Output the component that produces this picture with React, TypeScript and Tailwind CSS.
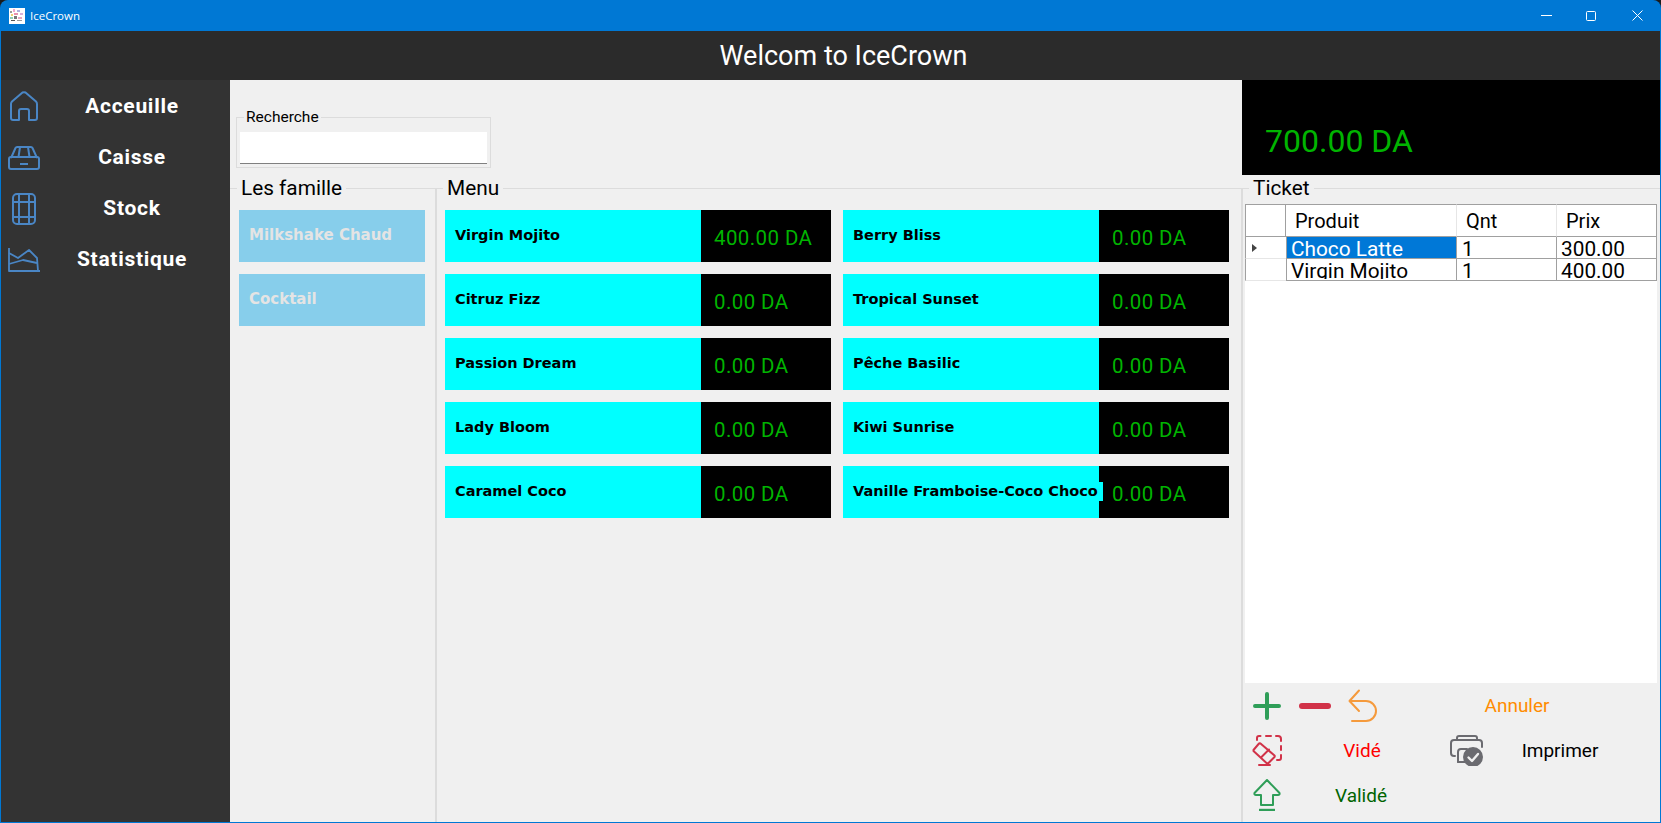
import type { ReactNode } from 'react';

const families = ['Milkshake Chaud', 'Cocktail'];

const menuItems = [
  { name: 'Virgin Mojito', price: '400.00 DA' },
  { name: 'Berry Bliss', price: '0.00 DA' },
  { name: 'Citruz Fizz', price: '0.00 DA' },
  { name: 'Tropical Sunset', price: '0.00 DA' },
  { name: 'Passion Dream', price: '0.00 DA' },
  { name: 'Pêche Basilic', price: '0.00 DA' },
  { name: 'Lady Bloom', price: '0.00 DA' },
  { name: 'Kiwi Sunrise', price: '0.00 DA' },
  { name: 'Caramel Coco', price: '0.00 DA' },
  { name: 'Vanille Framboise-Coco Choco', price: '0.00 DA' },
];

const ticketRows = [
  { name: 'Choco Latte', qty: '1', price: '300.00', selected: true },
  { name: 'Virgin Mojito', qty: '1', price: '400.00', selected: false },
];

function AppIcon() {
  return (
    <svg width="16" height="16" viewBox="0 0 16 16" className="shrink-0">
      <rect width="16" height="16" fill="#ffffff" />
      <rect x="1" y="3" width="2" height="2" fill="#9a9a9a" />
      <rect x="4" y="1" width="2" height="3" fill="#f0a8d0" />
      <rect x="8" y="2" width="3" height="2" fill="#b0b0e0" />
      <rect x="2" y="6" width="2" height="2" fill="#f0d070" />
      <rect x="5" y="5" width="4" height="2" fill="#e890b0" />
      <rect x="11" y="5" width="3" height="2" fill="#d8b0d8" />
      <rect x="1" y="9" width="3" height="2" fill="#90d0b8" />
      <rect x="5" y="8" width="3" height="3" fill="#777777" />
      <rect x="9" y="9" width="4" height="2" fill="#e8a8c0" />
      <rect x="2" y="12" width="4" height="1" fill="#555555" />
      <rect x="8" y="12" width="5" height="1" fill="#999999" />
    </svg>
  );
}

function HomeIcon() {
  return (
    <svg width="30" height="31" viewBox="0 0 30 31" fill="none" stroke="#4a86c5" strokeWidth="2" strokeLinejoin="round">
      <path d="M2 13 Q2 11.5 3 10.5 L13.5 1.5 Q15 .8 16.5 1.5 L27 10.5 Q28 11.5 28 13 V27 Q28 29 26 29 H20 V20 Q20 18 18 18 H12 Q10 18 10 20 V29 H4 Q2 29 2 27 Z" />
    </svg>
  );
}

function DrawerIcon() {
  return (
    <svg width="32" height="24" viewBox="0 0 32 24" fill="none" stroke="#4a86c5" strokeWidth="2" strokeLinejoin="round">
      <path d="M3 12 L7.5 2 Q8 1 9 1 H23 Q24 1 24.5 2 L29 12" />
      <path d="M12 1 L10.5 11 M20 1 L21.5 11" />
      <rect x="1" y="11" width="30" height="12" rx="2" />
      <path d="M12 18 H20" />
    </svg>
  );
}

function StockIcon() {
  return (
    <svg width="24" height="32" viewBox="0 0 24 32" fill="none" stroke="#4a86c5" strokeWidth="2">
      <rect x="1" y="1" width="22" height="30" rx="4" />
      <path d="M7 1 V31 M17 1 V31 M1 9 H23 M1 24 H23" />
    </svg>
  );
}

function ChartIcon() {
  return (
    <svg width="32" height="24" viewBox="0 0 32 24" fill="none" stroke="#4a86c5" strokeWidth="1.8" strokeLinejoin="round">
      <path d="M1 0 V23 H32" />
      <path d="M1 5 L10 10 L21 2 L29 10 L30 23" />
      <path d="M1 16 L15 12 L29 15" />
    </svg>
  );
}

function PlusIcon() {
  return (
    <svg width="28" height="28" viewBox="0 0 28 28" fill="none" stroke="#2f9e58" strokeWidth="4" strokeLinecap="round">
      <path d="M14 2 V26 M2 14 H26" />
    </svg>
  );
}

function MinusIcon() {
  return (
    <svg width="32" height="8" viewBox="0 0 32 8" fill="none" stroke="#d13248" strokeWidth="6" strokeLinecap="round">
      <path d="M3 4 H29" />
    </svg>
  );
}

function UndoIcon() {
  return (
    <svg width="30" height="33" viewBox="0 0 30 33" fill="none" stroke="#f59a3c" strokeWidth="2" strokeLinecap="round" strokeLinejoin="round">
      <path d="M11 1.5 L1.5 12 L11 22 M2 12 H18 A10 10 0 0 1 18 32 H4" />
    </svg>
  );
}

function EraseIcon() {
  return (
    <svg width="30" height="31" viewBox="0 0 30 31" fill="none" stroke="#d13248" strokeWidth="2" strokeLinejoin="round" strokeLinecap="round">
      <path d="M5 5 V3 Q5 1 7 1 H8.500 M14 1 H19 M24 1 H26 Q29 1 29 4 V6 M29 11 V15 M29 20 V23 Q29 25 27 25 H25" />
      <path d="M1.500 15 L7 8.500 Q7.500 8 8.500 8.500 L22.500 20.500 Q23 21 22.500 22 L16.500 28 Q15.500 28.500 14.500 28 L1.500 16 Z" />
      <path d="M17 14.500 L9.500 22" />
      <path d="M7 30 H18" />
    </svg>
  );
}

function PrinterCheckIcon() {
  return (
    <svg width="33" height="31" viewBox="0 0 33 31" fill="none" stroke="#6b6b70" strokeWidth="2" strokeLinecap="round" strokeLinejoin="round">
      <path d="M7 5 V3 Q7 1 9 1 H25 Q27 1 27 3 V5" />
      <path d="M5 21 H4 Q1 21 1 18 V8 Q1 5 4 5 H29 Q32 5 32 8 V12" />
      <path d="M8 27 V17 Q8 14 11 14 H17" />
      <path d="M8 27 Q8 27 11 27 H15" />
      <circle cx="23" cy="22" r="9" fill="#6b6b70" />
      <path d="M18.5 22.5 L22 26 L28 19" stroke="#f0f0f0" strokeWidth="2.4" />
    </svg>
  );
}

function UploadIcon() {
  return (
    <svg width="28" height="32" viewBox="0 0 28 32" fill="none" stroke="#2f9e58" strokeWidth="2" strokeLinejoin="round">
      <path d="M14 1 L26.5 14 Q27 16 25 16 H20 V26 H8 V16 H3 Q1 16 1.5 14 Z" />
      <path d="M6 31 H22" strokeWidth="2.4" />
    </svg>
  );
}

function Group({ title, className, legendClass, children }: { title: string; className: string; legendClass: string; children: ReactNode }) {
  return (
    <fieldset className={`min-w-0 border-0 border-t border-[#dcdcdc] ${className}`}>
      <legend className={`px-[4px] text-[20.8px] leading-[26px] text-black ${legendClass}`}>{title}</legend>
      {children}
    </fieldset>
  );
}

const navItems = [
  { label: 'Acceuille', icon: <HomeIcon /> },
  { label: 'Caisse', icon: <DrawerIcon /> },
  { label: 'Stock', icon: <StockIcon /> },
  { label: 'Statistique', icon: <ChartIcon /> },
];

export default function App() {
  return (
    <div className="h-[823px] w-[1661px] overflow-hidden bg-[#1a1a1a] font-['Roboto',sans-serif]">
      <div className="flex h-full w-full flex-col overflow-hidden rounded-t-[8px] bg-[#0078d4] px-[1px] pb-[1px]">
        {/* title bar */}
        <div className="flex h-[31px] shrink-0 items-center pl-[8px] text-white">
          <AppIcon />
          <span className="ml-[5px] font-['Open_Sans',sans-serif] text-[11.5px]">IceCrown</span>
          <div className="ml-auto flex items-center pr-[17px]">
            <svg width="11" height="11" viewBox="0 0 11 11" className="mr-[34px]" stroke="white" strokeWidth="1">
              <path d="M0 5.5 H11" />
            </svg>
            <svg width="10" height="10" viewBox="0 0 10 10" className="mr-[36px]" fill="none" stroke="white" strokeWidth="1">
              <rect x=".5" y=".5" width="9" height="9" rx="1" />
            </svg>
            <svg width="11" height="11" viewBox="0 0 11 11" stroke="white" strokeWidth="1">
              <path d="M.5 .5 L10.5 10.5 M10.5 .5 L.5 10.5" />
            </svg>
          </div>
        </div>

        {/* header */}
        <div className="flex h-[49px] shrink-0 items-center justify-center bg-[#2b2b2b] pt-[1px] pl-[26px] text-[27px] text-white">
          Welcom to IceCrown
        </div>

        <div className="flex min-h-0 flex-1 bg-[#f0f0f0]">
          {/* sidebar */}
          <nav className="w-[229px] shrink-0 bg-[#333333] pt-[1px]">
            {navItems.map((item) => (
              <div key={item.label} className="flex h-[51px] items-center">
                <div className="flex w-[44px] shrink-0 justify-center pl-[1px]">{item.icon}</div>
                <span className="w-[174px] text-center text-[21px] font-bold tracking-[0.7px] text-white">{item.label}</span>
              </div>
            ))}
          </nav>

          {/* center */}
          <div className="flex w-[1012px] shrink-0 flex-col">
            <div className="h-[95px] shrink-0 pt-[28px] pl-[6px]">
              <fieldset className="h-[60px] w-[255px] border border-[#dcdcdc]">
                <legend className="ml-[7px] px-[2px] text-[15.5px] leading-[19px] text-black">Recherche</legend>
                <input className="mx-[3px] mt-[5px] block h-[32px] w-[247px] border-b border-[#808080] bg-white outline-none" />
              </fieldset>
            </div>
            <div className="flex min-h-0 flex-1">
              <Group title="Les famille" legendClass="ml-[7px]" className="w-[207px] shrink-0 border-r-2">
                <div className="flex flex-col gap-[12px] pt-[9px] pl-[9px]">
                  {families.map((family) => (
                    <button
                      key={family}
                      className="flex h-[52px] w-[186px] items-center bg-[#87ceeb] pb-[2px] pl-[10px] font-['DejaVu_Sans',sans-serif] text-[15px] font-bold text-[#e4e4e4]"
                    >
                      {family}
                    </button>
                  ))}
                </div>
              </Group>
              <Group title="Menu" legendClass="ml-[6px]" className="flex-1 border-r">
                <div className="grid w-[792px] grid-cols-[386px_386px] gap-x-[12px] gap-y-[12px] pt-[9px] pl-[8px]">
                  {menuItems.map((item) => (
                    <div key={item.name} className="flex h-[52px] w-[386px]">
                      <div className="flex w-[256px] shrink-0 items-center bg-[#00ffff] pb-[1px] pl-[10px] font-['DejaVu_Sans',sans-serif] text-[14.5px] font-bold whitespace-nowrap text-black">
                        <span className="relative z-10 flex h-[19px] shrink-0 items-center bg-[#00ffff] pr-[5px]">{item.name}</span>
                      </div>
                      <div className="flex flex-1 items-center bg-black pt-[5px] pl-[13px] text-[20.5px] tracking-[0.4px] text-[#00b400]">
                        {item.price}
                      </div>
                    </div>
                  ))}
                </div>
              </Group>
            </div>
          </div>

          {/* ticket */}
          <div className="flex min-w-0 flex-1 flex-col">
            <div className="flex h-[95px] shrink-0 items-end bg-black pb-[15px] pl-[23px] text-[32px] leading-[38px] text-[#00b400]">
              700.00 DA
            </div>
            <Group title="Ticket" legendClass="ml-[6px]" className="flex min-h-0 flex-1 flex-col border-l">
              <div className="mt-[3px] ml-[2px] h-[479px] w-[412px] bg-white">
                <div className="grid grid-cols-[41px_171px_100px_100px] text-black">
                  <div className="h-[33px] border-y border-r border-l border-[#a0a0a0]" />
                  <div className="flex h-[33px] items-center border-y border-r border-y-[#a0a0a0] border-r-[#e6e6e6] pt-[1px] pl-[9px] text-[20px]">Produit</div>
                  <div className="flex h-[33px] items-center border-y border-r border-y-[#a0a0a0] border-r-[#e6e6e6] pt-[1px] pl-[9px] text-[20px]">Qnt</div>
                  <div className="flex h-[33px] items-center border-y border-r border-[#a0a0a0] pt-[1px] pl-[9px] text-[20px]">Prix</div>
                  {ticketRows.map((row) => (
                    <div key={row.name} className="contents text-[20.8px] leading-[24px]">
                      <div className="flex h-[22px] items-center border-b border-l border-b-[#e6e6e6] border-l-[#a0a0a0] pl-[6px]">
                        {row.selected && <span className="h-0 w-0 border-y-[4px] border-l-[5px] border-y-transparent border-l-[#444444]" />}
                      </div>
                      <div className={`h-[22px] border-x border-b border-[#a0a0a0] pl-[4px] ${row.selected ? 'bg-[#0078d7] text-white' : ''}`}>
                        <div className="h-[20px] overflow-hidden">{row.name}</div>
                      </div>
                      <div className="h-[22px] border-r border-b border-[#a0a0a0] pl-[5px]">
                        <div className="h-[20px] overflow-hidden">{row.qty}</div>
                      </div>
                      <div className="h-[22px] border-r border-b border-[#a0a0a0] pl-[4px]">
                        <div className="h-[20px] overflow-hidden">{row.price}</div>
                      </div>
                    </div>
                  ))}
                </div>
              </div>
              <div className="text-[19px]">
                <div className="flex h-[45px] items-center pl-[10px]">
                  <PlusIcon />
                  <span className="ml-[18px]"><MinusIcon /></span>
                  <span className="ml-[17px]"><UndoIcon /></span>
                  <button className="ml-[62px] w-[154px] pt-[2px] text-center text-[#ff8c00]">Annuler</button>
                </div>
                <div className="flex h-[44px] items-center pl-[9px]">
                  <EraseIcon />
                  <button className="ml-[30px] w-[100px] pt-[2px] text-center text-[#ff0000]">Vidé</button>
                  <span className="ml-[38px]"><PrinterCheckIcon /></span>
                  <button className="ml-[27px] w-[100px] pt-[2px] text-center text-black">Imprimer</button>
                </div>
                <div className="flex h-[46px] items-center pl-[10px]">
                  <UploadIcon />
                  <button className="ml-[30px] w-[100px] pt-[2px] text-center text-[#006400]">Validé</button>
                </div>
              </div>
            </Group>
          </div>
        </div>
      </div>
    </div>
  );
}
